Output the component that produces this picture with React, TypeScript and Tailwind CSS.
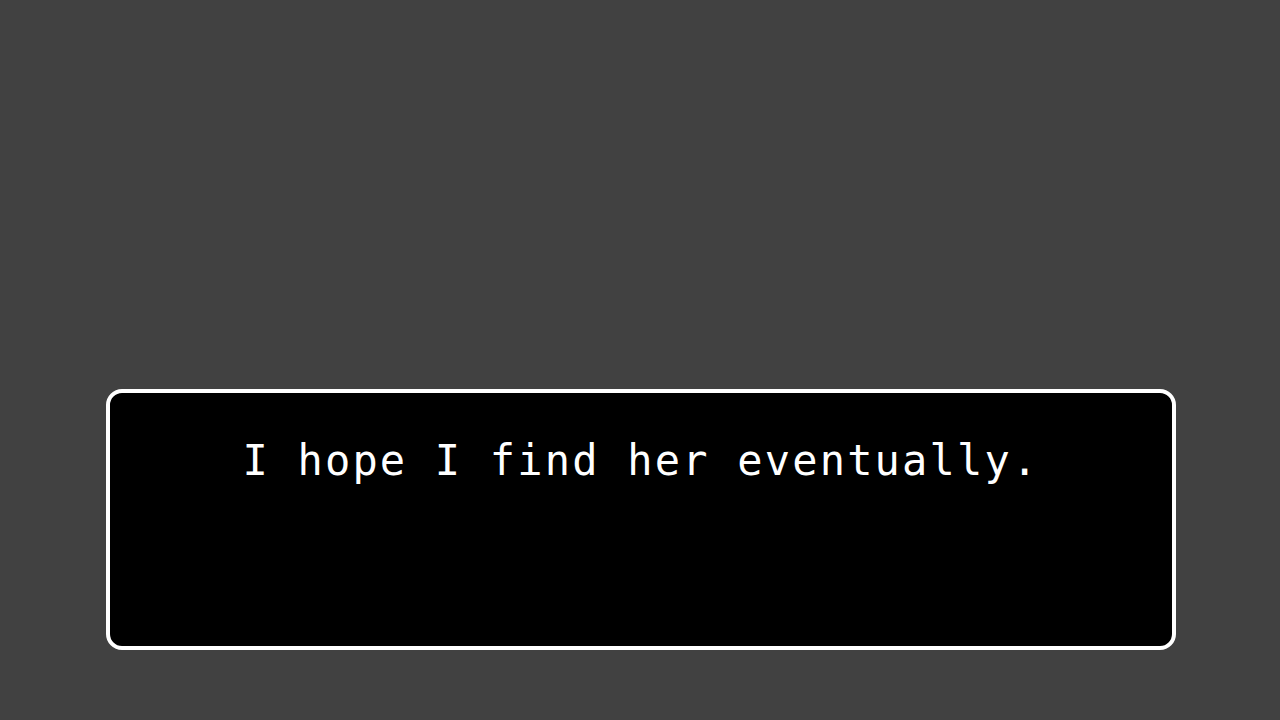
export default function App() {
  return (
    <div className="min-h-screen w-full bg-[#414141] pt-[389px]">
      <div className="ml-[106px] w-[1070px] h-[261px] rounded-[16px] border-4 border-white bg-black pt-[47px]">
        <p
          className="text-center text-white text-[42px] leading-[42px] tracking-[2.2px] whitespace-pre"
          style={{ fontFamily: '"DejaVu Sans Mono", "Liberation Mono", monospace' }}
        >
          I hope I find her eventually.
        </p>
      </div>
    </div>
  )
}
